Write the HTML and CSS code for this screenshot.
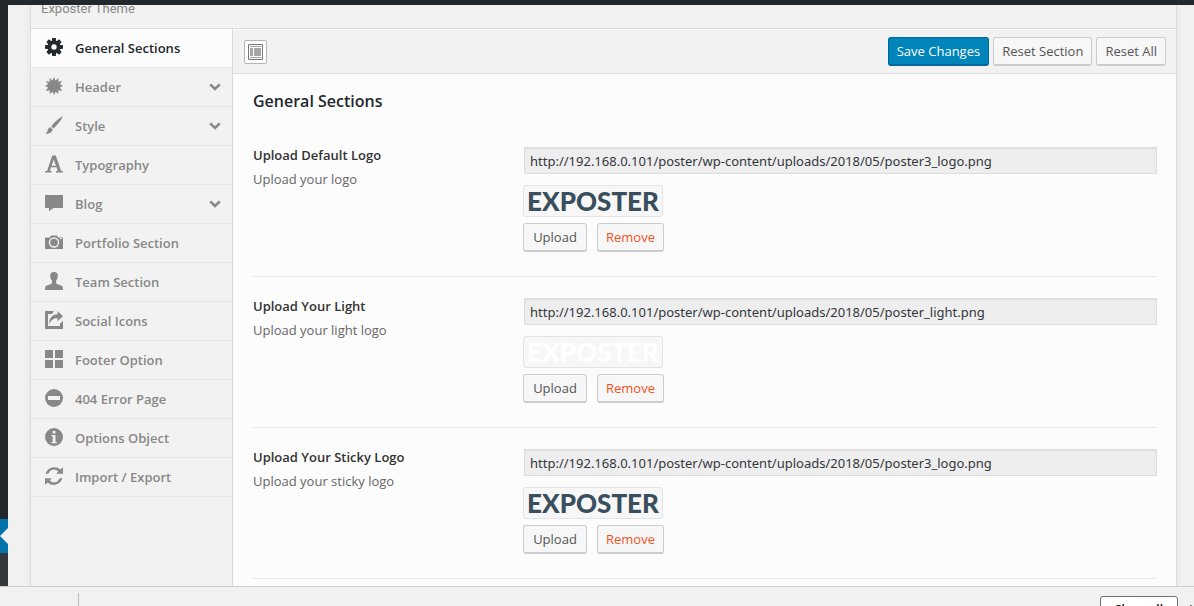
FILE: index.html
```html
<!DOCTYPE html>
<html lang="en">
<head>
<meta charset="utf-8">
<title>Exposter Theme Options</title>
<link rel="stylesheet" href="styles.css">
</head>
<body>
<svg class="sprite" aria-hidden="true">
  <symbol id="chevron" viewBox="0 0 12 8"><path d="M1.200 1.400L6 6L10.800 1.400" fill="none" stroke="currentColor" stroke-width="2.600"/></symbol>
</svg>
<div class="app">
  <div class="admin-bar"></div>
  <div class="workspace">
    <div class="admin-menu"><div class="admin-current"></div></div>
    <main class="page">
      <div class="panel">
        <header class="panel-head"><span>Exposter Theme</span></header>
        <div class="panel-body">
          <nav class="sidebar">
            <a class="item active" href="#general"><svg class="icon" viewBox="0 0 18 18"><g fill="currentColor"><circle cx="9" cy="9" r="6.500"/><path id="cog" d="M7.200 0h3.600l.5 4h-4.600zM7.200 18h3.600l.5-4h-4.600z"/><use href="#cog" transform="rotate(45 9 9)"/><use href="#cog" transform="rotate(90 9 9)"/><use href="#cog" transform="rotate(135 9 9)"/></g><circle cx="9" cy="9" r="2.700" fill="#fcfcfc"/></svg><span>General Sections</span></a>
            <a class="item" href="#header"><svg class="icon" viewBox="0 0 18 18"><path fill="currentColor" d="M9 0l1.500 3.400L13.500 1l-.3 3.700 4-.8-2.300 3.200L18 9l-3.100 1.600 2.300 3.400-4-.7.300 3.700-3-2.300L9 18l-1.500-3.300-3 2.300.3-3.700-4 .7 2.300-3.400L0 9l3.100-1.900L.8 3.900l4 .8L4.500 1l3 2.400z"/></svg><span>Header</span><svg class="chevron"><use href="#chevron"/></svg></a>
            <a class="item" href="#style"><svg class="icon" viewBox="0 0 18 18"><path fill="currentColor" d="M18 0C14 2.200 8.600 6.800 6.300 10.400l2.200 2.100C12 9.300 16.300 4.100 18 0zM5.500 11.300c-1.600.2-2.300 1.300-2.700 2.700C2.400 15.500 1.700 17 0 17.600c3 .6 6.900-.6 7.700-4.200z"/></svg><span>Style</span><svg class="chevron"><use href="#chevron"/></svg></a>
            <a class="item" href="#typography"><svg class="icon" viewBox="0 0 18 18"><path fill="currentColor" fill-rule="evenodd" d="M7.200.5h3.600l5.200 15.300 2 .5V17.500h-7v-1.200l1.600-.5-1-3.600h-5.600l-1 3.600 1.700.5v1.200H0v-1.200l2.200-.5zM8.700 4.600L6.700 10.700h4.200z"/></svg><span>Typography</span></a>
            <a class="item" href="#blog"><svg class="icon" viewBox="0 0 18 18"><path fill="currentColor" d="M0 1h18v13H8.600L4 17.200V14H0z"/></svg><span>Blog</span><svg class="chevron"><use href="#chevron"/></svg></a>
            <a class="item" href="#portfolio"><svg class="icon" viewBox="0 0 18 18"><path fill="currentColor" d="M6 2.500h6l1 2h5v11.500H0V4.500h5z"/><circle cx="9" cy="9.500" r="4.500" fill="none" stroke="#f2f2f2" stroke-width="1.400"/><path d="M15 5.600h2" stroke="#f2f2f2"/></svg><span>Portfolio Section</span></a>
            <a class="item" href="#team"><svg class="icon" viewBox="0 0 18 18"><path fill="currentColor" d="M9 0c2.600 0 4 1.500 3.800 4-.1 2.300-.8 3.500-1.700 4.600v2.700c1 1.100 3.200 1.600 5.100 2.300C17.600 14.100 18 15 18 18H0c0-3 .4-3.900 1.800-4.400 1.900-.7 4.100-1.200 5.100-2.300V8.600C6 7.500 5.300 6.300 5.200 4 5 1.500 6.400 0 9 0z"/></svg><span>Team Section</span></a>
            <a class="item" href="#social"><svg class="icon" viewBox="0 0 18 18"><path fill="currentColor" d="M0 0h9L7 3H3v12h12v-2.500l3-2.500v8H0zM12.500 0L18 5.200l-5.500 5.100V7.200C8.800 7 6.200 8.600 4.300 13.200 3.900 7.600 7 3.500 12.500 3.300z"/></svg><span>Social Icons</span></a>
            <a class="item" href="#footer"><svg class="icon" viewBox="0 0 18 18"><path fill="currentColor" d="M0 0h8v8H0zM10 0h8v8h-8zM0 10h8v8H0zM10 10h8v8h-8z"/></svg><span>Footer Option</span></a>
            <a class="item" href="#error"><svg class="icon" viewBox="0 0 18 18"><circle cx="9" cy="9" r="9" fill="currentColor"/><path fill="#f2f2f2" d="M3 7h12v4H3z"/></svg><span>404 Error Page</span></a>
            <a class="item" href="#object"><svg class="icon" viewBox="0 0 18 18"><circle cx="9" cy="9" r="9" fill="currentColor"/><path fill="#f2f2f2" d="M7.600 3h2.900v2.600H7.600zM6.500 7h4v7h1.300v1.200H6.400V14h1.300V8.200H6.500z"/></svg><span>Options Object</span></a>
            <a class="item" href="#import"><svg class="icon" viewBox="0 0 18 18"><g fill="currentColor"><path id="arc" d="M.6 6.700C2 2.500 5.300.2 9.300.2c2.400 0 4.300.8 5.900 2.300L18 .3V6.700h-6.800l2-2.300C12 3.200 10.700 2.400 9.200 2.400 6.500 2.400 4.400 3.900 3.300 6.700z"/><use href="#arc" transform="rotate(180 9 9)"/></g></svg><span>Import / Export</span></a>
          </nav>
          <section class="main">
            <div class="toolbar">
              <button class="expand" type="button" aria-label="Expand options"><svg viewBox="0 0 15 16"><path fill="#fff" stroke="#777" d="M.5.5h14v15H.5z"/><path fill="#a5a5a5" d="M2 2h11v1H2zM2 4h3v8H2zM6 4h7v8H6zM2 13h11v1H2z"/></svg></button>
              <div class="actions">
                <button class="btn primary" type="button">Save Changes</button>
                <button class="btn" type="button">Reset Section</button>
                <button class="btn" type="button">Reset All</button>
              </div>
            </div>
            <div class="content">
              <h2>General Sections</h2>
              <div class="field">
                <div class="label"><label for="logo-default">Upload Default Logo</label><p>Upload your logo</p></div>
                <div class="control">
                  <input id="logo-default" type="text" readonly value="http://192.168.0.101/poster/wp-content/uploads/2018/05/poster3_logo.png">
                  <div class="preview">EXPOSTER</div>
                  <div class="buttons"><button class="btn" type="button">Upload</button><button class="btn remove" type="button">Remove</button></div>
                </div>
              </div>
              <div class="field">
                <div class="label"><label for="logo-light">Upload Your Light</label><p>Upload your light logo</p></div>
                <div class="control">
                  <input id="logo-light" type="text" readonly value="http://192.168.0.101/poster/wp-content/uploads/2018/05/poster_light.png">
                  <div class="preview light">EXPOSTER</div>
                  <div class="buttons"><button class="btn" type="button">Upload</button><button class="btn remove" type="button">Remove</button></div>
                </div>
              </div>
              <div class="field">
                <div class="label"><label for="logo-sticky">Upload Your Sticky Logo</label><p>Upload your sticky logo</p></div>
                <div class="control">
                  <input id="logo-sticky" type="text" readonly value="http://192.168.0.101/poster/wp-content/uploads/2018/05/poster3_logo.png">
                  <div class="preview">EXPOSTER</div>
                  <div class="buttons"><button class="btn" type="button">Upload</button><button class="btn remove" type="button">Remove</button></div>
                </div>
              </div>
            </div>
          </section>
        </div>
      </div>
    </main>
  </div>
  <footer class="downloads">
    <span class="divider"></span>
    <button class="show-all" type="button">Show all</button>
    <button class="close" type="button" aria-label="Close"><svg viewBox="0 0 10 10"><path d="M0 0l10 10M10 0L0 10" stroke="#666" stroke-width="2"/></svg></button>
  </footer>
</div>
</body>
</html>
```

FILE: styles.css
```css
* { box-sizing: border-box; }
body {
  margin: 0;
  background: #f1f1f1;
  color: #555;
  font: 13px/20px "Open Sans", "Noto Sans", sans-serif;
}
button, input { font: inherit; }
.sprite { display: none; }
.app { display: flex; flex-direction: column; height: 100vh; overflow: hidden; }
.admin-bar { flex: none; height: 5px; background: #23282d; }
.workspace { display: flex; flex: 1; min-height: 0; overflow: hidden; }
.admin-menu {
  flex: none;
  display: flex;
  flex-direction: column;
  justify-content: flex-end;
  width: 8px;
  padding-bottom: 33px;
  background: linear-gradient(#23282d, #23282d) top / 100% 530px no-repeat #32373c;
}
.admin-current {
  display: flow-root;
  height: 34px;
  background: #0073aa;
}
.admin-current::after {
  content: "";
  display: block;
  width: 0;
  margin-top: 9px;
  border: 8px solid transparent;
  border-left: 0;
  border-right-color: #f1f1f1;
}
.page { flex: 1; min-width: 0; padding: 0 17px 0 22px; }
.panel {
  display: flex;
  flex-direction: column;
  height: 100%;
  border: solid #dcdcdc;
  border-width: 0 1px;
  background: #f2f2f2;
  box-shadow: 0 1px 5px rgba(0, 0, 0, .06);
}
.panel-head {
  flex: none;
  display: flex;
  align-items: flex-end;
  height: 24px;
  padding: 0 10px 9px;
  border-bottom: 1px solid #dcdcdc;
  color: #888;
  font: 13px/20px Roboto, "Liberation Sans", sans-serif;
}
.panel-body { display: flex; flex: 1; min-height: 0; }
.sidebar {
  flex: none;
  width: 202px;
  border-right: 1px solid #d8d8d8;
}
.item {
  display: flex;
  align-items: center;
  gap: 12px;
  height: 39px;
  padding: 0 11px 0 14px;
  border-bottom: 1px solid #e7e7e7;
  color: #888;
  font-weight: 600;
  text-decoration: none;
}
.item.active { background: #fcfcfc; color: #23282d; }
.icon { flex: none; width: 18px; height: 18px; margin-bottom: 2px; }
.chevron { width: 12px; height: 8px; margin-left: auto; }
.main { flex: 1; min-width: 0; background: #fcfcfc; overflow: hidden; }
.toolbar {
  display: flex;
  align-items: center;
  justify-content: space-between;
  height: 45px;
  padding: 0 10px 0 11px;
  border-top: 1px solid #fcfcfc;
  border-bottom: 1px solid #dedede;
  background: #f2f2f2;
}
.expand {
  display: grid;
  place-items: center;
  width: 23px;
  height: 24px;
  padding: 0;
  border: 1px solid #b5b5b5;
  border-radius: 2px;
  background: #fff;
}
.expand svg { width: 15px; height: 16px; }
.actions { display: flex; gap: 4px; }
.btn {
  min-width: 64px;
  height: 29px;
  padding: 0 8px;
  border: 1px solid #ccc;
  border-bottom-width: 2px;
  border-radius: 3px;
  background: #f7f7f7;
  color: #555;
  white-space: nowrap;
}
.btn.primary {
  border-color: #006799;
  background: #0085ba;
  color: #fff;
}
.btn.remove { color: #ef521d; }
.content { padding: 17px 20px 0; }
h2 { margin: 0 0 36px; color: #23282d; font-size: 16px; line-height: 20px; font-weight: 600; }
.field {
  display: grid;
  grid-template-columns: 270px 1fr;
  margin-bottom: 21px;
  padding-bottom: 24px;
  border-bottom: 1px solid #e7e7e7;
}
.label label { display: block; color: #333; line-height: 16px; font-weight: 600; }
.label p { margin: 6px 0 0; color: #666; }
.control { min-width: 0; }
.control input {
  display: block;
  width: 100%;
  height: 27px;
  margin-left: 1px;
  padding: 0 5px;
  border: 1px solid #ddd;
  background: #eee;
  box-shadow: inset 0 1px 2px rgba(0, 0, 0, .07);
  color: #32373c;
  font-family: "Noto Sans", sans-serif;
}
.preview {
  width: 140px;
  height: 32px;
  margin-top: 11px;
  border: 1px solid #e3e3e3;
  border-radius: 3px;
  background: #f7f7f7;
  color: #3a4f5e;
  font: 900 26px/30px Lato, sans-serif;
  text-align: center;
}
.preview.light { color: #fff; }
.buttons { display: flex; gap: 10px; margin-top: 6px; }
.downloads {
  flex: none;
  display: flex;
  height: 20px;
  padding-left: 78px;
  border-top: 1px solid #ccc;
  background: #f1f1f1;
  overflow: hidden;
}
.divider { height: 20px; margin: 6px auto 0 0; border-left: 1px solid #bbb; }
.show-all {
  flex: none;
  width: 78px;
  height: 28px;
  margin: 9px 12px 0 0;
  padding: 0;
  border: 1px solid #707070;
  border-radius: 3px;
  background: #fff;
  color: #111;
  font-size: 12px;
  font-weight: 600;
}
.close { flex: none; width: 4px; height: 10px; margin-top: 18px; padding: 0; border: 0; background: none; overflow: hidden; }
.close svg { display: block; width: 10px; height: 10px; }
```
